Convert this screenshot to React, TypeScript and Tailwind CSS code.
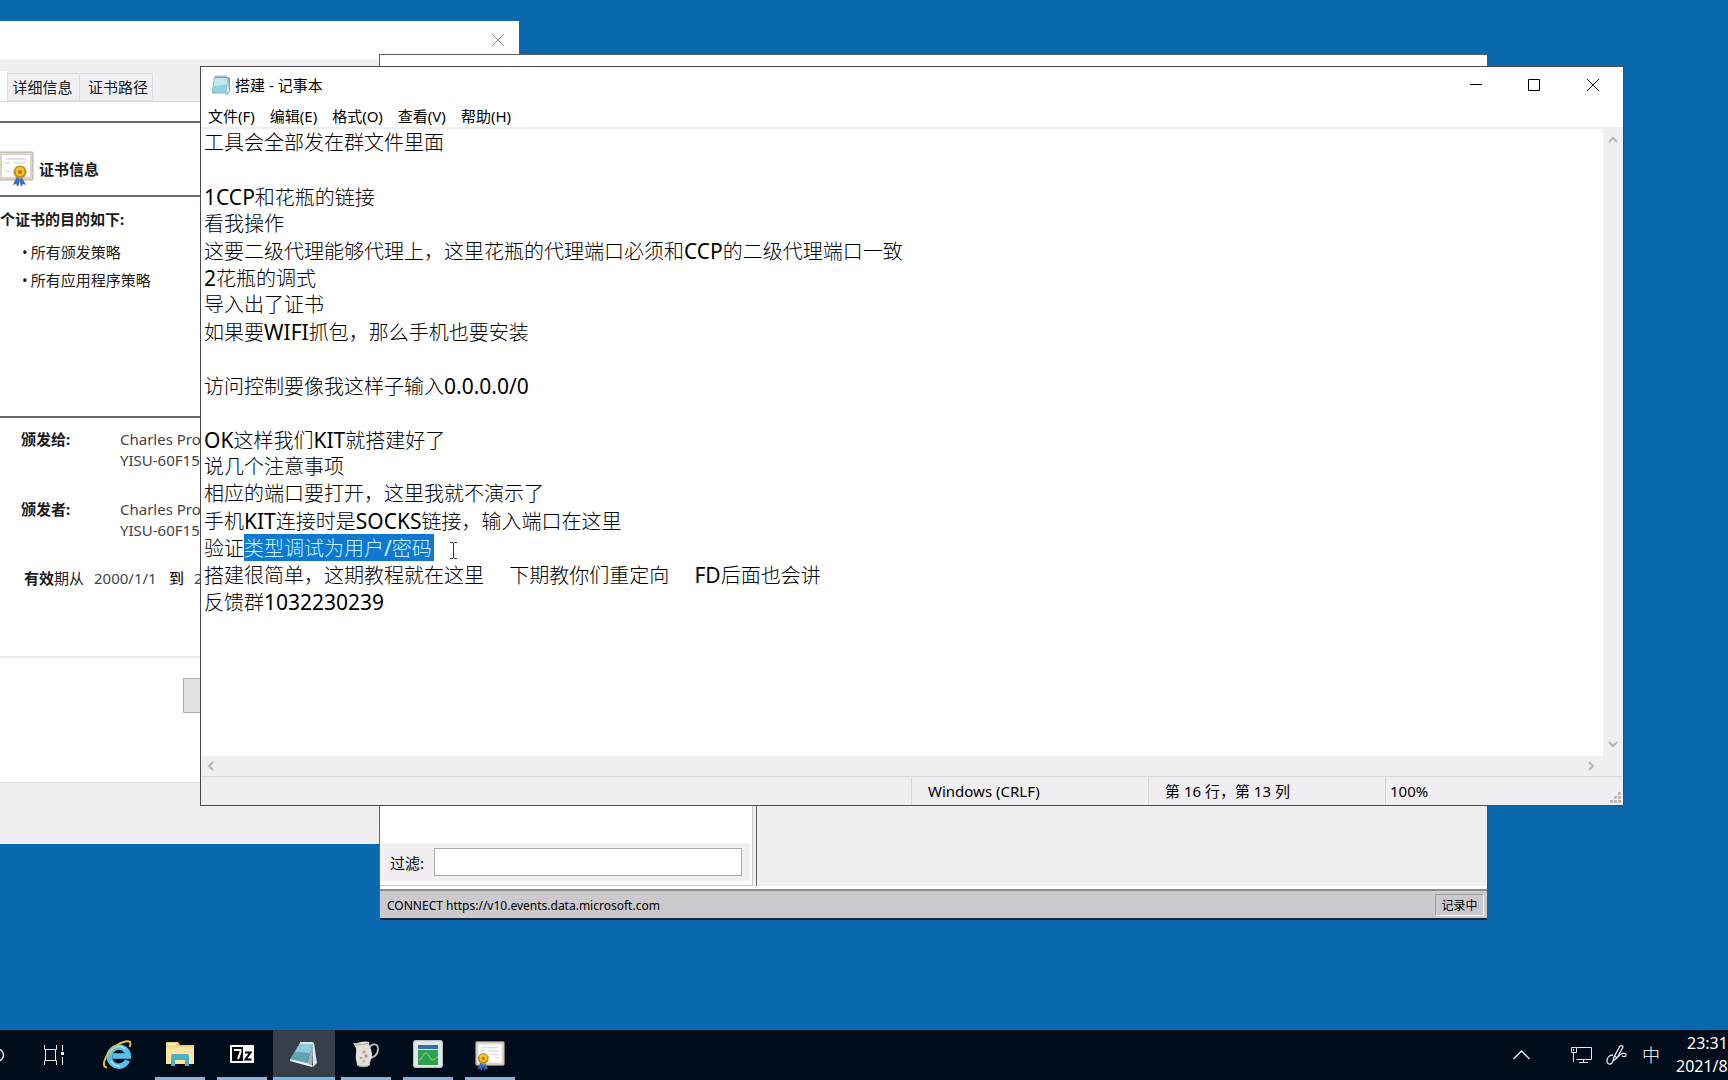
import React from "react";

const UI_FONT = "font-['Noto_Sans','Noto_Sans_CJK_SC',sans-serif]";

const LINES: { text: string; selected?: string }[] = [
  { text: "工具会全部发在群文件里面" },
  { text: "" },
  { text: "1CCP和花瓶的链接" },
  { text: "看我操作" },
  { text: "这要二级代理能够代理上，这里花瓶的代理端口必须和CCP的二级代理端口一致" },
  { text: "2花瓶的调式" },
  { text: "导入出了证书" },
  { text: "如果要WIFI抓包，那么手机也要安装" },
  { text: "" },
  { text: "访问控制要像我这样子输入0.0.0.0/0" },
  { text: "" },
  { text: "OK这样我们KIT就搭建好了" },
  { text: "说几个注意事项" },
  { text: "相应的端口要打开，这里我就不演示了" },
  { text: "手机KIT连接时是SOCKS链接，输入端口在这里" },
  { text: "验证", selected: "类型调试为用户/密码" },
  { text: "搭建很简单，这期教程就在这里\u3000 下期教你们重定向\u3000 FD后面也会讲" },
  { text: "反馈群1032230239" },
];

function Mixed({ text }: { text: string }) {
  return (
    <>
      {text.split(/([A-Za-z0-9./]+)/).map((part, i) =>
        i % 2 ? (
          <span key={i} className="text-[21px] font-normal">
            {part}
          </span>
        ) : (
          part
        ),
      )}
    </>
  );
}

function CertificateIcon({ className, sealLeft }: { className: string; sealLeft?: boolean }) {
  return (
    <svg viewBox="0 0 36 36" className={className} aria-hidden="true">
      <rect x="1" y="1" width="34" height="28" rx="1" fill="#ddd3c8" stroke="#b9aca4" />
      <rect x="4" y="4" width="28" height="22" fill="#fdfdfb" />
      <path d="M8 8h20M16 12h12M18 16h10M7 12h5M7 20h5M24 20h5" stroke="#cbcad2" strokeWidth="1" />
      <g transform={sealLeft ? "translate(-10 0)" : "translate(2 0)"}>
        <path d="M17 25l-4 9 3-1 2 3 3-10zM21 25l5 9-3-1-2 3-2-10z" fill="#3c6cb8" />
        <circle cx="20" cy="21" r="6.500" fill="#c98d10" />
        <circle cx="20" cy="20.500" r="4.500" fill="#f0c23a" />
        <circle cx="20" cy="21" r="2" fill="#b47d0c" />
      </g>
    </svg>
  );
}

function NotepadIcon({ className }: { className: string }) {
  return (
    <svg viewBox="0 0 20 20" className={className} aria-hidden="true">
      <path d="M17 2l2 1v13l-3 4-2-1z" fill="#7d9fa6" />
      <path d="M4 2h13l1 14-3 3H2z" fill="#e8f3f4" />
      <path d="M3.500 2.500h13.500l-2 15.500H1z" fill="#93d3df" />
      <path d="M3.500 2.500h13.500l-.9 7L2.200 11z" fill="#bfe9ef" />
      <path d="M3.500 2.500h13.500l-2 15.500H1z" fill="none" stroke="#6fb3c0" strokeWidth=".7" />
      <path d="M5 .5v2.500M7 .5v2.500M9 .5v2.500M11 .5v2.500M13 .5v2.500M15 .5v2.500" stroke="#5d7076" strokeWidth=".9" />
    </svg>
  );
}

function Chevron({ d }: { d: string }) {
  return (
    <svg viewBox="0 0 10 10" className="size-[10px]" fill="none" stroke="#b5b3b6" strokeWidth="2" aria-hidden="true">
      <path d={d} />
    </svg>
  );
}

function CertificateWindow() {
  return (
    <section
      aria-label="证书"
      className="absolute left-0 top-[21px] flex h-[823px] w-[519px] flex-col bg-[#f0eef0] text-[15px] leading-5 text-[#1a1a1a]"
    >
      <div className="flex h-[38px] items-center justify-end bg-white pr-[15px]">
        <button aria-label="关闭" className="p-0">
          <svg viewBox="0 0 12 12" className="size-[12px]" stroke="#8a8a8a" strokeWidth="1" aria-hidden="true">
            <path d="M0 0l12 12M12 0L0 12" />
          </svg>
        </button>
      </div>
      <div role="tablist" className="mt-[12px] flex h-[30px] items-end">
        <button role="tab" aria-selected="true" aria-label="常规" className="h-[30px] w-[7px] bg-white" />
        <button role="tab" aria-selected="false" className="h-[28px] w-[73px] border border-[#dcdadc] pr-[2px]">
          <span className="whitespace-nowrap">详细信息</span>
        </button>
        <button
          role="tab"
          aria-selected="false"
          className="h-[28px] w-[73px] border border-l-0 border-[#dcdadc] pl-[4px]"
        >
          <span className="whitespace-nowrap">证书路径</span>
        </button>
      </div>
      <div className="flex h-[682px] flex-col border-y border-[#dcdadc] bg-white">
        <div className="mt-[19px] flex h-[76px] items-center gap-[5px] border-y-2 border-[#6a6a6a] pt-[20px]">
          <CertificateIcon className="-ml-[2px] h-[36px] w-[36px]" />
          <h2 className="font-bold">证书信息</h2>
        </div>
        <div className="h-[221px] border-b-2 border-[#6a6a6a] pt-[12px]">
          <p className="font-bold">个证书的目的如下:</p>
          <ul className="mt-[13px] flex flex-col gap-2 pl-[22px]">
            <li className="flex gap-[3px]">
              <span>•</span>所有颁发策略
            </li>
            <li className="flex gap-[3px]">
              <span>•</span>所有应用程序策略
            </li>
          </ul>
        </div>
        <dl className="mt-[11px] grid grid-cols-[99px_1fr] gap-y-[28px] pl-[21px] leading-[21px]">
          <dt className="font-bold">颁发给:</dt>
          <dd className="text-[#444]">
            Charles Pro
            <br />
            YISU-60F15
          </dd>
          <dt className="font-bold">颁发者:</dt>
          <dd className="text-[#444]">
            Charles Pro
            <br />
            YISU-60F15
          </dd>
        </dl>
        <p className="mt-[27px] flex pl-[24px]">
          <span className="w-[70px]">
            <b>有效</b>期从
          </span>
          <span className="w-[75px] text-[#444]">2000/1/1</span>
          <span className="w-[25px] font-medium">到</span>
          <span className="text-[#444]">2</span>
        </p>
        <div className="mt-[68px] border-t-2 border-[#ebe9eb] pt-[20px]">
          <button aria-label="颁发者说明" className="ml-[183px] block h-[35px] w-[180px] border border-[#adadad] bg-[#e1e1e1]" />
        </div>
      </div>
    </section>
  );
}

function CharlesWindow() {
  return (
    <section
      aria-label="Charles"
      className="absolute left-[379px] top-[54px] flex h-[866px] w-[1108px] flex-col border-l border-t border-[#5f5f66] bg-white"
    >
      <div className="h-[60px]" />
      <div className="flex min-h-0 flex-1 bg-[#f0eef0]">
        <div className="flex w-[373px] flex-col border-b border-r border-[#c9c9c9] bg-white pl-[1px]">
          <div className="flex-1" />
          <div className="mb-[4px] mr-[2px] flex h-[38px] items-center bg-[#f0eef0] pl-[9px] pr-[8px]">
            <label htmlFor="filter" className="w-[44px] pt-[2px] text-[15px] leading-5 text-black">
              过滤:
            </label>
            <input id="filter" className="h-[28px] min-w-0 flex-1 border border-[#a9a9a9] bg-white outline-none" />
          </div>
        </div>
        <div className="ml-[3px] w-px bg-[#5f5f66]" />
      </div>
      <div className="h-[3px] bg-white" />
      <footer className="flex h-[31px] items-center border-b-2 border-t-2 border-b-[#14283c] border-t-[#8c8c8c] bg-[#cbc9cc] pl-[7px] pr-[3px] text-[12px] leading-4 text-black">
        <span className="pt-[2px]">CONNECT https://v10.events.data.microsoft.com</span>
        <span className="ml-auto flex h-[22px] w-[49px] items-center justify-center border border-[#9d9b9e] border-b-white border-r-white pt-[2px]">
          记录中
        </span>
      </footer>
    </section>
  );
}

function NotepadWindow() {
  return (
    <section
      aria-label="搭建 - 记事本"
      className="absolute left-[200px] top-[66px] flex h-[740px] w-[1424px] flex-col border border-[#4a4a4a] bg-white text-[15px] leading-5 text-black"
    >
      <header className="flex h-[36px] items-center pl-[10px]">
        <NotepadIcon className="size-5" />
        <h1 className="ml-1">搭建 - 记事本</h1>
        <div className="ml-auto flex">
          <button aria-label="最小化" className="flex h-[36px] w-[58px] items-center justify-center">
            <svg viewBox="0 0 12 12" className="size-[12px]" stroke="#000" aria-hidden="true">
              <path d="M0 5.500h12" />
            </svg>
          </button>
          <button aria-label="最大化" className="flex h-[36px] w-[58px] items-center justify-center">
            <svg viewBox="0 0 12 12" className="size-[12px]" fill="none" stroke="#000" aria-hidden="true">
              <path d="M.5.5h11v11H.5z" />
            </svg>
          </button>
          <button aria-label="关闭" className="flex h-[36px] w-[60px] items-center justify-center">
            <svg viewBox="0 0 12 12" className="size-[12px]" stroke="#000" aria-hidden="true">
              <path d="M0 0l12 12M12 0L0 12" />
            </svg>
          </button>
        </div>
      </header>
      <nav className="flex h-[26px] items-center gap-[15px] border-b-2 border-[#f0eef0] pl-[7px] pt-[2px]">
        {["文件(F)", "编辑(E)", "格式(O)", "查看(V)", "帮助(H)"].map((m) => (
          <button key={m}>{m}</button>
        ))}
      </nav>
      <div className="flex min-h-0 flex-1">
        <div className="flex min-w-0 flex-1 flex-col">
          <div
            role="textbox"
            aria-multiline="true"
            aria-label="文本编辑器"
            contentEditable
            suppressContentEditableWarning
            spellCheck={false}
            className="flex-1 cursor-text pl-[3px] font-light outline-none"
          >
            {LINES.map((l, i) => (
              <div key={i} className="h-[27px] whitespace-pre text-[20px] leading-[28px]">
                <Mixed text={l.text} />
                {l.selected && (
                  <span className="inline-block h-[27px] bg-[#0f78d0] pr-[2px] text-[#c6f4fb]">
                    <Mixed text={l.selected} />
                  </span>
                )}
              </div>
            ))}
          </div>
          <div className="flex h-[20px] items-center justify-between bg-[#f0eef0] pl-[5px] pr-[7px]">
            <Chevron d="M7 1L3 5l4 4" />
            <Chevron d="M3 1l4 4-4 4" />
          </div>
        </div>
        <div className="flex w-5 flex-col items-center justify-between bg-[#f0eef0] pb-[27px] pt-[6px]">
          <Chevron d="M1 7l4-4 4 4" />
          <Chevron d="M1 3l4 4 4-4" />
        </div>
      </div>
      <footer className="flex h-[29px] items-stretch border-t border-[#d7d5d7] bg-[#f0eef0] leading-[28px]">
        <div className="flex-1" />
        <div className="w-[237px] border-l border-[#d7d5d7] pl-4">Windows (CRLF)</div>
        <div className="w-[237px] border-l border-[#d7d5d7] pl-4">第 16 行，第 13 列</div>
        <div className="flex w-[238px] items-end justify-between border-l border-[#d7d5d7] pl-[4px]">
          <span>100%</span>
          <svg viewBox="0 0 12 12" className="m-[1px] size-[12px]" fill="#bcbabd" aria-hidden="true">
            <path d="M8 0h3v3H8zM4 4h3v3H4zM8 4h3v3H8zM0 8h3v3H0zM4 8h3v3H4zM8 8h3v3H8z" />
          </svg>
        </div>
      </footer>
      <svg
        viewBox="0 0 9 17"
        className="absolute left-[248px] top-[475px] h-[17px] w-[9px]"
        fill="none"
        stroke="#333"
        aria-hidden="true"
      >
        <path d="M1 .5h3M5 .5h3M4.500 1v15M1 16.500h3M5 16.500h3" />
      </svg>
    </section>
  );
}

function IeIcon() {
  return (
    <svg viewBox="0 0 30 30" className="size-[30px]" fill="none" aria-hidden="true">
      <path d="M25.500 20.500a9.500 9.500 0 1 1 .8-4.500H10.500" stroke="#55c3ea" strokeWidth="5.500" />
      <path d="M8 13a9 9 0 0 1 15-4M9 21a9 9 0 0 0 9 5" stroke="#a5e6f7" strokeWidth="1.500" />
      <path
        d="M5 27.500C-2 27 4 13 13 6.500 20 1 28.500-.5 28.500 3.500c0 1.500-.5 2.500-1 3.500"
        stroke="#e6c23c"
        strokeWidth="2"
      />
    </svg>
  );
}

function FolderIcon() {
  return (
    <svg viewBox="0 0 28 24" className="h-[24px] w-[28px]" aria-hidden="true">
      <path d="M0 1q0-1 1-1h11l2 3h13q1 0 1 1v18H0z" fill="#efd07a" />
      <path d="M0 5h28v17H0z" fill="#fbe3a0" />
      <path d="M2 1.500h8v2H2z" fill="#fff5cf" />
      <path d="M5 24V14q0-2 2-2h14q2 0 2 2v10h-4v-6H9v6z" fill="#4fb0c0" />
    </svg>
  );
}

function SevenZipIcon() {
  return (
    <svg viewBox="0 0 24 18" className="h-[18px] w-[24px]" aria-hidden="true">
      <path d="M0 0h24v18H0z" fill="#fff" />
      <path d="M2 2h11v14H2z" fill="#000" />
      <path d="M4 5h6.500v2L8 14" fill="none" stroke="#fff" strokeWidth="2" />
      <path d="M15 7.500h5.500l-5 7h6" fill="none" stroke="#000" strokeWidth="2" />
    </svg>
  );
}

function NotepadTaskIcon() {
  return (
    <svg viewBox="0 0 28 28" className="size-[28px]" aria-hidden="true">
      <path d="M22 2l2 1 3 20-4 4z" fill="#dfe7e8" />
      <path d="M23 3l-6 20 5 3z" fill="#9fb3b8" />
      <path d="M10 3h13l-6 20L0 19z" fill="#5fa5b5" />
      <path d="M10 3h13l-3 10-15-1z" fill="#8fc9d3" />
      <path d="M10 2h13v2H10z" fill="#dce6e8" />
      <path d="M0 19l17 4 6 3-1 1L0 21z" fill="#eef3f3" />
    </svg>
  );
}

function JugIcon() {
  return (
    <svg viewBox="0 0 28 28" className="size-[28px]" aria-hidden="true">
      <path d="M17 8c3-5 9-5 9 1s-4 8-9 10" fill="none" stroke="#bdbdbd" strokeWidth="1.800" />
      <path d="M1 3c5 1 10-3 16-1 0 5 3 7 3 13 0 5-3 6-2 10-4 3-9 3-13 0 0-4-2-6-1-11C5 8 3 6 1 3z" fill="#e2dfdd" />
      <path d="M3 4c5 1 10 1 13-1M5 25c4 2 9 2 12 0" fill="none" stroke="#a09c9b" />
      <circle cx="12" cy="12" r="1.800" fill="#d3a1a4" />
      <circle cx="14" cy="16" r="1.800" fill="#c98f95" />
      <circle cx="9" cy="18" r="1.500" fill="#a9b89c" />
      <circle cx="12" cy="21" r="1.500" fill="#b5bfa8" />
    </svg>
  );
}

function MonitorIcon() {
  return (
    <svg viewBox="0 0 30 28" className="h-[28px] w-[30px]" aria-hidden="true">
      <rect x=".5" y=".5" width="29" height="27" rx="2" fill="#dfe7e8" stroke="#b4bfc2" />
      <path d="M5 5h20v4H5z" fill="#3a6ea8" />
      <path d="M5 10h20v15H5z" fill="#2fa04c" />
      <path d="M6 20c3 0 4-7 7-7s4 8 7 7 3-3 5-3" fill="none" stroke="#8fdc9d" />
    </svg>
  );
}

const TASKS = [
  { label: "文件资源管理器", icon: <FolderIcon /> },
  { label: "7-Zip", icon: <SevenZipIcon /> },
  { label: "记事本", icon: <NotepadTaskIcon />, active: true },
  { label: "Charles", icon: <JugIcon /> },
  { label: "任务管理器", icon: <MonitorIcon /> },
  { label: "证书", icon: <CertificateIcon className="mt-[3px] size-[30px]" sealLeft /> },
];

function Taskbar() {
  return (
    <footer className="flex h-[50px] shrink-0 items-center overflow-hidden bg-[#020d1b] text-white">
      <button aria-label="搜索" className="h-full w-[23px]">
        <svg viewBox="0 0 5 14" className="h-[14px] w-[5px]" fill="none" stroke="#e8e8e8" strokeWidth="1.500" aria-hidden="true">
          <circle cx="-2.500" cy="7" r="6" />
        </svg>
      </button>
      <button aria-label="任务视图" className="flex h-full w-[62px] items-center justify-center">
        <svg viewBox="0 0 20 20" className="size-[20px]" fill="none" stroke="#e8e8e8" aria-hidden="true">
          <path d="M.5 0v4.500h12V0M.5 20v-4.500h12V20M1.500 4.500v11M11.500 4.500v11M18.500 0v6M18.500 12v8" />
          <path d="M17 7h3v3h-3z" fill="#fff" stroke="none" />
        </svg>
      </button>
      <button aria-label="Internet Explorer" className="flex h-full w-[64px] items-center justify-center">
        <IeIcon />
      </button>
      {TASKS.map((t) => (
        <button
          key={t.label}
          aria-label={t.label}
          className={
            t.active
              ? "flex h-full w-[62px] flex-col bg-[#373f4b]"
              : "flex h-full w-[62px] flex-col px-[6px]"
          }
        >
          <span className="flex w-full flex-1 items-center justify-center pt-[1px]">{t.icon}</span>
          <span className={t.active ? "h-[3px] w-full bg-[#76b2e4]" : "h-[3px] w-full bg-[#8eb0d6]"} />
        </button>
      ))}
      <div className="ml-auto flex items-center">
        <button aria-label="显示隐藏的图标" className="mr-[41px]">
          <svg viewBox="0 0 17 10" className="h-[10px] w-[17px]" fill="none" stroke="#e8e8e8" strokeWidth="1.500" aria-hidden="true">
            <path d="M.5 9l8-8 8 8" />
          </svg>
        </button>
        <svg viewBox="0 0 21 18" className="mr-[14px] h-[18px] w-[21px]" fill="none" stroke="#e8e8e8" aria-hidden="true">
          <path d="M5.500 1.500h15v12h-15M.5 1.500h5v5h-5zM2.500 6.500v9.500M12.500 13.500v3M8 16.500h9M2.500 3v2" />
        </svg>
        <svg viewBox="0 0 21 21" className="mr-[15px] size-[21px]" fill="none" stroke="#e8e8e8" strokeWidth="1.300" aria-hidden="true">
          <path d="M7 16l1-4 6-11q2-1 3 1l-6 11zM9 11l2 2M7 10c-4 0-6 3-6 6s3 4 5 2M12 12c2-4 8-5 8-2 0 2-2 2-4 1M6 18l1-2" />
        </svg>
        <span className="w-[34px] text-[18px] font-light leading-5">中</span>
        <div className="w-[52px] whitespace-nowrap text-[16px] leading-[23px]">
          <div className="pl-[11px]">23:31</div>
          <div>2021/8</div>
        </div>
      </div>
    </footer>
  );
}

export default function App() {
  return (
    <div className={`flex h-screen flex-col overflow-hidden bg-[#0968ae] ${UI_FONT}`}>
      <main className="relative min-h-0 flex-1 overflow-hidden">
        <CertificateWindow />
        <CharlesWindow />
        <NotepadWindow />
      </main>
      <Taskbar />
    </div>
  );
}
